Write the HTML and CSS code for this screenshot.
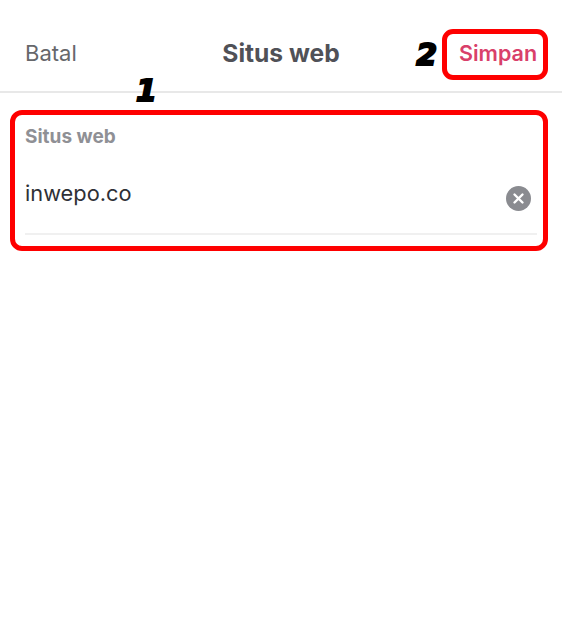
FILE: index.html
```html
<!DOCTYPE html>
<html lang="en">
<head>
  <meta charset="UTF-8">
  <title>Situs web</title>
  <link rel="stylesheet" href="styles.css">
</head>
<body>

<div class="header">
  <span class="cancel">Batal</span>
  <span class="title">Situs web</span>
  <div class="actions">
    <span class="mark">2</span>
    <span class="save">Simpan</span>
  </div>
</div>
<span class="mark mark-one">1</span>

<div class="field">
  <p class="field-label">Situs web</p>
  <div class="field-row">
    <span class="field-value">inwepo.co</span>
    <svg class="clear" viewBox="0 0 25 25" width="25" height="25">
      <circle cx="12.5" cy="12.5" r="12.5" fill="#8a8b90"/>
      <path d="M8.5 8.5l8 8M16.5 8.5l-8 8" stroke="#fff" stroke-width="2.4" stroke-linecap="round"/>
    </svg>
  </div>
</div>

</body>
</html>
```

FILE: styles.css
```css
body {
  margin: 0;
  background: #fff;
  font-family: "Inter", "Open Sans", sans-serif;
}

.header {
  display: grid;
  grid-template-columns: 1fr auto 1fr;
  align-items: center;
  height: 91px;
  padding: 0 14px;
  border-bottom: 2px solid #e8e8e8;
}
.cancel {
  padding-left: 11px;
  font-size: 22px;
  color: #66676b;
  margin-top: 14px;
}
.title {
  font-size: 24.6px;
  font-weight: 700;
  color: #505157;
  margin-top: 14px;
}
.actions {
  display: flex;
  align-items: center;
  justify-content: flex-end;
  gap: 5px;
  margin-top: 18px;
}
.save {
  box-sizing: border-box;
  width: 106px;
  height: 51px;
  padding-left: 12px;
  border: 5px solid #fe0000;
  border-radius: 11px;
  font-size: 21.5px;
  font-weight: 600;
  line-height: 38px;
  white-space: nowrap;
  color: #d9406a;
}

.mark {
  font-family: "DejaVu Sans", sans-serif;
  font-size: 30px;
  font-weight: 700;
  font-style: italic;
  line-height: 1;
  color: #000;
  -webkit-text-stroke: 2px #000;
}
.mark-one {
  position: absolute;
  left: 136px;
  top: 76px;
}

.field {
  box-sizing: border-box;
  height: 141px;
  margin: 17px 14px 0 10px;
  padding: 0 6px 0 10px;
  border: 5px solid #fe0000;
  border-radius: 12px;
}
.field-label {
  margin: 10px 0 0;
  font-size: 19px;
  font-weight: 700;
  color: #8f9095;
}
.field-row {
  display: flex;
  align-items: center;
  justify-content: space-between;
  height: 73px;
  margin-top: 12px;
  padding-right: 6px;
  border-bottom: 2px solid #f0f0f0;
}
.field-value {
  font-size: 21.8px;
  color: #2f3036;
  margin-bottom: 8px;
}
.clear {
  margin-top: 3px;
}
```
